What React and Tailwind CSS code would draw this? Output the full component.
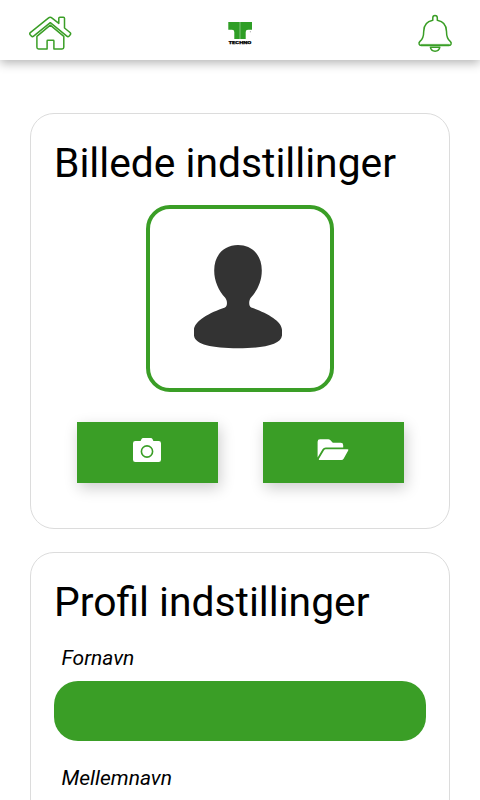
function HomeIcon() {
  return (
    <svg className="w-11 h-10" viewBox="28 13 44 40" fill="none" stroke="#3a9e26" strokeWidth="1.5" strokeLinejoin="round">
      <path d="M30.3 32.6 L48.3 18.1 Q50.2 16.6 52.1 18.1 L58.8 23.4 V18.3 Q58.8 17.2 59.9 17.2 H63.4 Q64.5 17.2 64.5 18.3 V28 L70 32.5 Q71.2 33.6 70.2 34.8 L69.2 36 Q68 37.2 66.8 36.2 L50.3 22.7 L33.6 36.2 Q32.4 37.2 31.3 36 L30.2 34.8 Q29.3 33.6 30.3 32.6 Z" />
      <path d="M36.9 36.4 L50.3 25.2 L63.8 36.4 V47.2 Q63.8 48.9 62.1 48.9 H53.9 V40.9 Q53.9 40.2 53.2 40.2 H47.8 Q47.1 40.2 47.1 40.9 V48.9 H38.6 Q36.9 48.9 36.9 47.2 Z" />
    </svg>
  );
}

function BellIcon() {
  return (
    <svg className="w-9 h-10" viewBox="417 13 36 40" fill="none" stroke="#3a9e26" strokeWidth="1.5" strokeLinejoin="round">
      <path d="M432.8 20.3 V17.8 Q432.8 15.5 435 15.5 Q437.3 15.5 437.3 17.8 V20.3 C443.5 21.4 446.5 26 446.5 31.5 C446.5 37.5 448 39.7 450.2 41.4 C452 43 451.2 45.6 449 45.6 H421.2 C419 45.6 418.2 43 420 41.4 C422.2 39.7 423.7 37.5 423.7 31.5 C423.7 26 426.7 21.4 432.8 20.3 Z" />
      <path d="M420.4 44.9 H449.8" strokeWidth="2" strokeOpacity="0.7" />
      <path d="M430.4 47.2 C430.8 49.8 432.2 51.2 435.1 51.2 C438 51.2 439.4 49.8 439.8 47.2 Z" />
    </svg>
  );
}

function Logo() {
  return (
    <svg className="w-7 h-6" viewBox="226 21 28 24">
      <path d="M228.3 22 H239.8 V39 H234.3 V32 Q234.3 29.8 232 29.8 H228.3 Z" fill="#2f9e26" />
      <path d="M240.2 22 H252 V29.8 H248 Q245.7 29.8 245.7 32 V39 H240.2 Z" fill="#2f9e26" />
      <circle cx="250.3" cy="31.8" r="0.5" fill="#777" />
      <text x="228.4" y="44" textLength="23" lengthAdjust="spacingAndGlyphs" fill="#000" stroke="#000" strokeWidth="0.25" className="font-['Roboto',sans-serif] text-[4.4px] font-black">TECHNO</text>
    </svg>
  );
}

function PersonIcon() {
  return (
    <svg className="w-[180px] h-[179px]" viewBox="150 209 180 179">
      <path fill="#333" d="M238 245 C252 245 261.8 255 261.8 270.5 C261.8 281 257.5 290.5 250.8 297.8 C248.7 300.5 248.5 306 251.2 307.5 C266 312.5 282 321 282 330 V335.5 C281 344.5 264 348.2 238 348.2 C212 348.2 195 344.5 194 335.5 V330 C194 321 210 312.5 225 307.5 C227.7 306 227.5 300.5 225.2 297.8 C218.5 290.5 214.2 281 214.2 270.5 C214.2 255 224 245 238 245 Z" />
    </svg>
  );
}

function CameraIcon() {
  return (
    <svg className="w-[30px] h-7" viewBox="132 436 30 28">
      <path fill="#fff" d="M135.3 441 H140.6 L141.4 439.2 Q142 438 143.3 438 H150.7 Q152 438 152.6 439.2 L153.4 441 H158.7 Q161 441 161 443.3 V459.7 Q161 462 158.7 462 H135.3 Q133 462 133 459.7 V443.3 Q133 441 135.3 441 Z" />
      <circle cx="147" cy="451.5" r="5.6" fill="none" stroke="#3a9e26" strokeWidth="1.6" />
    </svg>
  );
}

function FolderIcon() {
  return (
    <svg className="w-[34px] h-7" viewBox="316 436 34 28" fill="#fff">
      <path d="M320 439.3 H328.3 Q329.4 439.3 330.2 440.1 L332.8 442.8 H340.7 Q343.2 442.8 343.2 445.2 V447.4 H325.8 Q323.6 447.4 322.5 449.3 L317.6 457.5 V441.7 Q317.6 439.3 320 439.3 Z" />
      <path d="M325.8 449.2 H347.5 Q348.9 449.2 348.2 450.5 L343.6 458.7 Q342.8 460 341.4 460 H319.5 Q318.3 460 319 458.8 L323.9 450.4 Q324.6 449.2 325.8 449.2 Z" />
    </svg>
  );
}

function Card({ title, children }) {
  return (
    <section className="shrink-0 rounded-3xl border border-[#dcdcdc] px-[23px] pt-[25px]">
      <h1 className="text-[40.8px] leading-[48px] font-normal">{title}</h1>
      {children}
    </section>
  );
}

function ActionButton({ label, children }) {
  return (
    <button aria-label={label} className="flex h-[61px] w-[141px] justify-center bg-[#3a9e26] pt-3.5 pr-px shadow-[2px_5px_14px_rgba(0,0,0,0.2)]">
      {children}
    </button>
  );
}

function Field({ label }) {
  return (
    <label className="mb-[25px] block">
      <span className="block pl-[7.5px] text-[21px] leading-6 italic">{label}</span>
      <input className="mt-[11px] block h-[60px] w-full rounded-3xl bg-[#3a9e26] px-5 text-xl text-white outline-none" />
    </label>
  );
}

export default function App() {
  return (
    <div className="flex h-screen flex-col overflow-hidden bg-white font-['Roboto',sans-serif] text-black">
      <header className="flex h-[60px] shrink-0 items-start justify-between px-7 pt-[13px] shadow-[0_3px_10px_rgba(0,0,0,0.3)]">
        <HomeIcon />
        <div className="pt-2"><Logo /></div>
        <div className="flex w-11 justify-end">
          <div className="-mr-px"><BellIcon /></div>
        </div>
      </header>

      <main className="flex flex-col gap-[23px] px-[30px] pt-[53px]">
        <Card title="Billede indstillinger">
          <div className="mx-auto mt-[18px] h-[187px] w-[188px] rounded-3xl border-4 border-[#3a9e26]">
            <PersonIcon />
          </div>
          <div className="mt-[30px] mb-[45px] flex justify-center gap-[45px] pl-px">
            <ActionButton label="Tag billede"><CameraIcon /></ActionButton>
            <ActionButton label="Vælg billede"><FolderIcon /></ActionButton>
          </div>
        </Card>

        <Card title="Profil indstillinger">
          <div className="mt-5">
            <Field label="Fornavn" />
            <Field label="Mellemnavn" />
          </div>
        </Card>
      </main>
    </div>
  );
}
